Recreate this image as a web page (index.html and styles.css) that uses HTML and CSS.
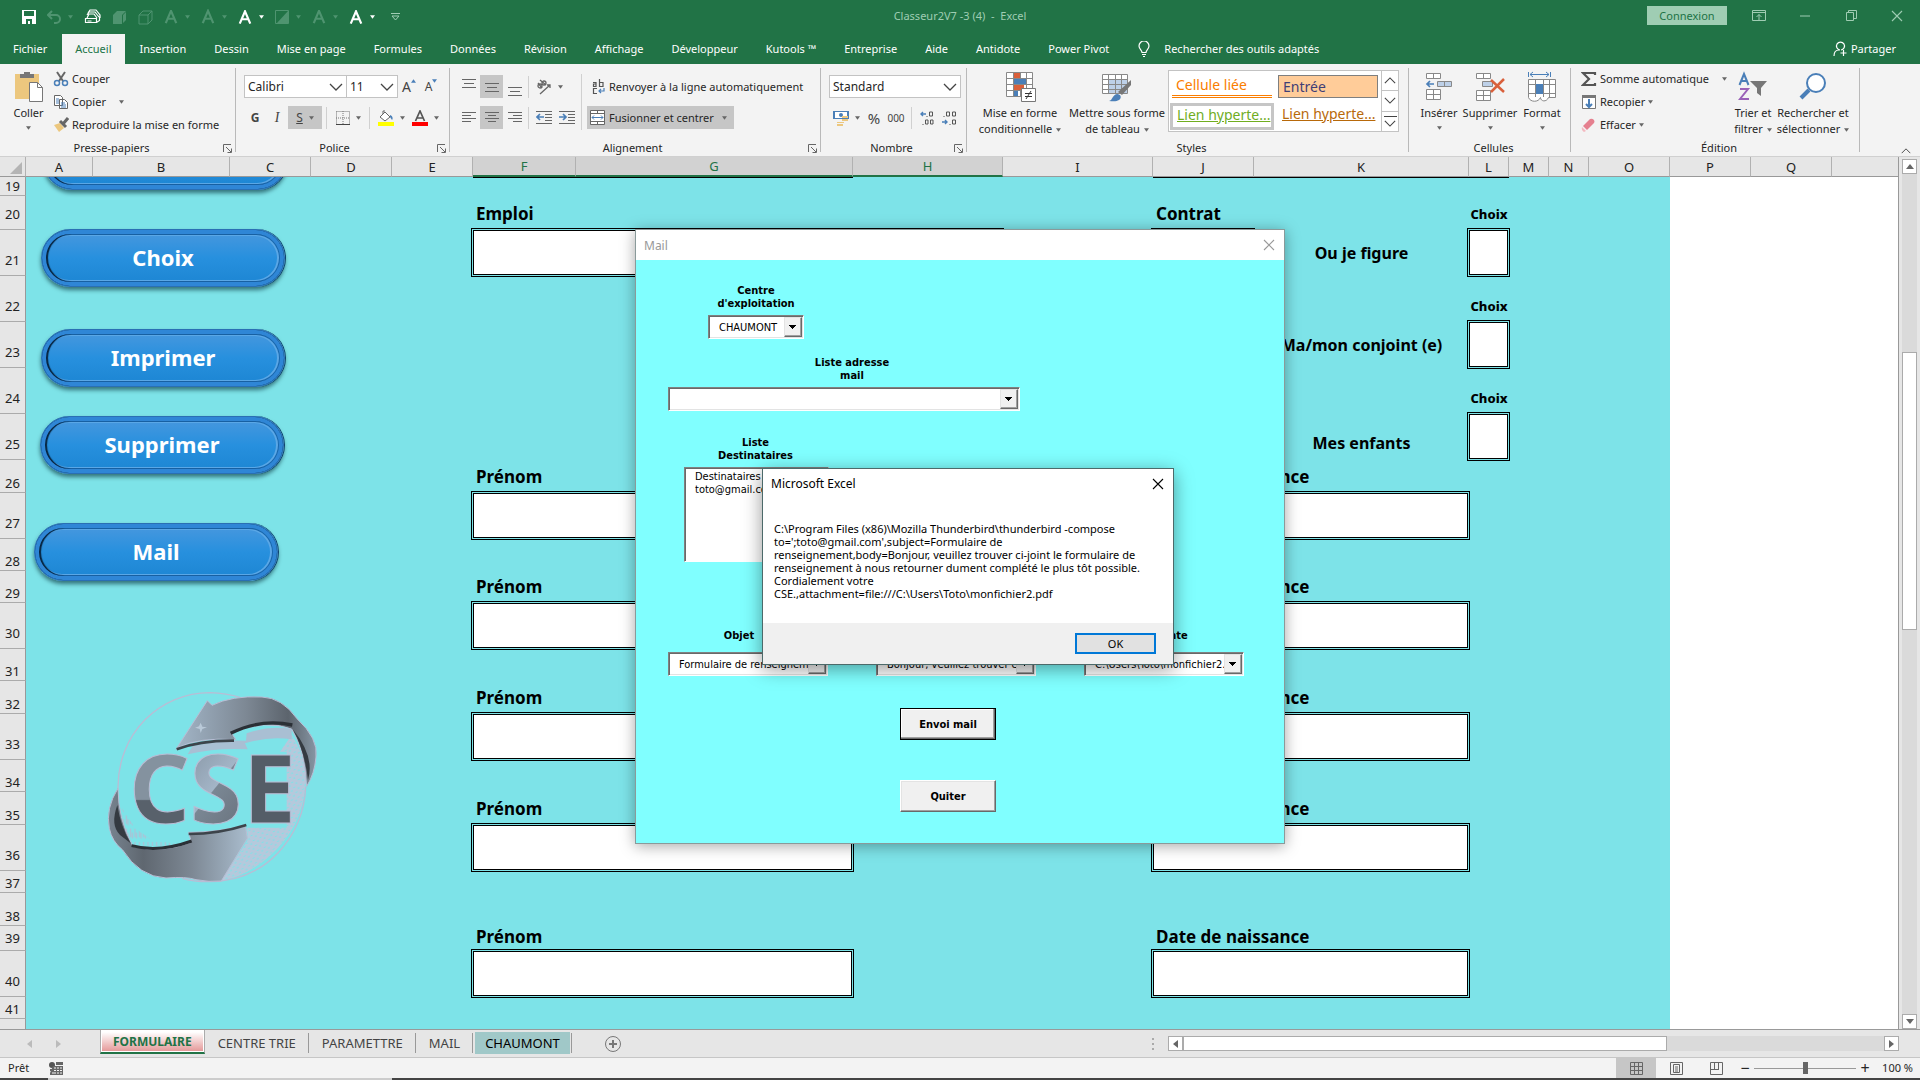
FILE: index.html
```html
<!DOCTYPE html>
<html lang="fr">
<head>
    <meta charset="UTF-8">
    <meta name="viewport" content="width=device-width, initial-scale=1.0">
    <title>Classeur2V7 -3 (4) - Excel</title>
    <link rel="stylesheet" href="styles.css">
</head>
<body>
<svg class="defs" aria-hidden="true">
    <symbol id="caret" viewBox="0 0 6 4"><path d="M0 0h6L3 4z" fill="currentColor"/></symbol>
    <symbol id="chevron" viewBox="0 0 14 8"><path d="M1 1l6 6 6-6" fill="none" stroke="currentColor" stroke-width="1.3"/></symbol>
    <symbol id="launcher" viewBox="0 0 9 9"><path d="M.5 8V.5H8M3 3l5 5M8.500 4.500v4h-4" fill="none" stroke="currentColor"/></symbol>
    <symbol id="cross" viewBox="0 0 12 12"><path d="M1 1l10 10M11 1L1 11" fill="none" stroke="currentColor" stroke-width="1.100"/></symbol>
    <symbol id="letter" viewBox="0 0 16 16"><path d="M2 15L8 1l6 14M4 10h8" fill="none" stroke="currentColor" stroke-width="2.500"/></symbol>
</svg>

<!-- Title bar -->
<header class="titlebar">
    <div class="quick">
        <button class="q on" aria-label="Enregistrer"><svg width="14" height="14" viewBox="0 0 14 14"><path d="M0 0h14v14H0z" fill="#fff"/><path d="M2 1h10v5H2zM4 9h6v5H8v-3H6v3H4z" fill="#217346"/></svg></button>
        <button class="q" aria-label="Annuler"><svg width="14" height="14" viewBox="0 0 14 14"><path d="M5 1L1 5l4 4M1 5h8a4 4 0 0 1 0 8H7" fill="none" stroke="currentColor" stroke-width="2"/></svg><svg class="caret"><use href="#caret"/></svg></button>
        <button class="q on" aria-label="Imprimer"><svg width="17" height="16" viewBox="0 0 17 16"><path d="M4 4l2-3h6l4 5v3M3 6l2-3h6l4 5M1.500 9.500h11v4h-11zM3 9l2-4h5l3 4M12.500 13.500l3-2V8M3.500 12h4" fill="none" stroke="currentColor" stroke-width="1.200"/></svg></button>
        <button class="q" aria-label="Avancer"><svg width="15" height="15" viewBox="0 0 15 15"><path d="M1 5l4-4h9L10 5zM1 5h9v9H1zM11 5l3-3v8l-3 3z" fill="currentColor"/></svg></button>
        <button class="q" aria-label="Reculer"><svg width="15" height="15" viewBox="0 0 15 15"><path d="M1 5l4-4h9v9l-4 4H1zM1 5h9v9M10 5l4-4" fill="none" stroke="currentColor"/></svg></button>
        <button class="q" aria-label="Style WordArt"><svg width="14" height="14"><use href="#letter"/></svg><svg class="caret"><use href="#caret"/></svg></button>
        <button class="q" aria-label="Reflet"><svg width="14" height="16"><use href="#letter"/></svg><svg class="caret"><use href="#caret"/></svg></button>
        <button class="q on" aria-label="Effets"><svg width="14" height="15"><use href="#letter"/></svg><svg class="caret"><use href="#caret"/></svg></button>
        <button class="q" aria-label="Remplissage"><svg width="14" height="14" viewBox="0 0 14 14"><path d="M.5.5h13v13H.5z" fill="none" stroke="currentColor"/><path d="M13 1v12H2z" fill="currentColor"/></svg><svg class="caret"><use href="#caret"/></svg></button>
        <button class="q" aria-label="Contour"><svg width="14" height="14"><use href="#letter"/></svg><svg class="caret"><use href="#caret"/></svg></button>
        <button class="q on" aria-label="Texte"><svg width="14" height="15"><use href="#letter"/></svg><svg class="caret"><use href="#caret"/></svg></button>
        <button class="q more" aria-label="Personnaliser"><svg width="9" height="8" viewBox="0 0 9 8"><path d="M0 .5h9M1 3l3.500 4L8 3z" fill="none" stroke="currentColor"/></svg></button>
    </div>
    <div class="doc-title">Classeur2V7 -3 (4)&nbsp; -&nbsp; Excel</div>
    <div class="window-tools">
        <button class="signin">Connexion</button>
        <button class="win" aria-label="Options du ruban"><svg width="14" height="11" viewBox="0 0 14 11"><path d="M.5.5h13v10H.5zM1 2.500h12M7 10V4.500M4.500 7L7 4.500 9.500 7" fill="none" stroke="currentColor"/></svg></button>
        <button class="win" aria-label="Réduire"><svg width="10" height="2" viewBox="0 0 10 2"><path d="M0 1h10" stroke="currentColor"/></svg></button>
        <button class="win" aria-label="Restaurer"><svg width="11" height="11" viewBox="0 0 11 11"><path d="M.5 2.500h7v8h-7zM2.500 2V.5h8v8H8" fill="none" stroke="currentColor"/></svg></button>
        <button class="win" aria-label="Fermer"><svg width="12" height="12"><use href="#cross"/></svg></button>
    </div>
</header>

<nav class="menu">
    <a href="#">Fichier</a>
    <a href="#" class="active">Accueil</a>
    <a href="#">Insertion</a>
    <a href="#">Dessin</a>
    <a href="#">Mise en page</a>
    <a href="#">Formules</a>
    <a href="#">Données</a>
    <a href="#">Révision</a>
    <a href="#">Affichage</a>
    <a href="#">Développeur</a>
    <a href="#">Kutools ™</a>
    <a href="#">Entreprise</a>
    <a href="#">Aide</a>
    <a href="#">Antidote</a>
    <a href="#">Power Pivot</a>
    <a href="#" class="tellme"><svg width="12" height="16" viewBox="0 0 12 16"><path d="M4 11.500C4 9 1 8 1 5a5 5 0 0 1 10 0c0 3-3 4-3 6.500zM4 13.500h4M5 15.500h2" fill="none" stroke="currentColor" stroke-width="1.200"/></svg>Rechercher des outils adaptés</a>
    <a href="#" class="share"><svg width="14" height="16" viewBox="0 0 14 16"><path d="M7 9a4 4 0 1 1 1 0M1 15c0-4 2-6 5-6M10.500 9v6M7.500 12h6" fill="none" stroke="currentColor" stroke-width="1.200"/></svg>Partager</a>
</nav>

<!-- Ribbon -->
<section class="ribbon">
    <div class="group clipboard">
        <div class="tools">
            <button class="big paste"><svg width="28" height="31" viewBox="0 0 28 31"><path d="M0 3h24v25H0z" fill="#ecc77e"/><path d="M5 7V3h4V1h6v2h4v4z" fill="#777"/><path d="M14.500 11.500h8l5 5v14h-13z" fill="#fff" stroke="#777"/><path d="M22.500 11.500v5h5" fill="none" stroke="#777"/></svg><span>Coller</span><svg class="caret"><use href="#caret"/></svg></button>
            <div class="stack">
                <button><svg width="16" height="16" viewBox="0 0 16 16"><path d="M4 1l6 9M12 1L6 10" stroke="#666" stroke-width="2"/><circle cx="4" cy="12" r="2.500" fill="none" stroke="#4a7fb8" stroke-width="1.500"/><circle cx="12" cy="12" r="2.500" fill="none" stroke="#4a7fb8" stroke-width="1.500"/></svg>Couper</button>
                <button><svg width="16" height="16" viewBox="0 0 16 16"><path d="M1.500 1.500h6l2 2v8h-8zM6.500 5.500h5l3 3v6h-8z" fill="#fff" stroke="#666"/><path d="M3 5h3M3 7h3M3 9h3M8 9h4M8 11h5M8 13h5" stroke="#4a7fb8"/></svg>Copier<svg class="caret far"><use href="#caret"/></svg></button>
                <button><svg width="16" height="16" viewBox="0 0 16 16"><path d="M1 8l6-2 4 5-5 4z" fill="#ecc77e"/><path d="M7 4l6 6M10 7l5-6" stroke="#666" stroke-width="3"/></svg>Reproduire la mise en forme</button>
            </div>
        </div>
        <div class="caption"><span>Presse-papiers</span><svg class="launcher"><use href="#launcher"/></svg></div>
    </div>

    <div class="group font">
        <div class="tools rows">
            <div class="row">
                <span class="pick name"><select aria-label="Police"><option>Calibri</option></select><svg class="chev"><use href="#chevron"/></svg></span>
                <span class="pick size"><select aria-label="Taille"><option>11</option></select><svg class="chev"><use href="#chevron"/></svg></span>
                <button class="tool glyph" aria-label="Agrandir la police">A<svg class="mark" viewBox="0 0 6 4"><path d="M0 4h6L3 0z" fill="#4a7fb8"/></svg></button>
                <button class="tool glyph small" aria-label="Réduire la police">A<svg class="mark" viewBox="0 0 6 4"><path d="M0 0h6L3 4z" fill="#4a7fb8"/></svg></button>
            </div>
            <div class="row">
                <button class="tool"><b>G</b></button>
                <button class="tool"><i>I</i></button>
                <button class="tool wide pressed"><u>S</u><svg class="caret"><use href="#caret"/></svg></button>
                <span class="sep slim"></span>
                <button class="tool wide" aria-label="Bordures"><svg width="14" height="14" viewBox="0 0 14 14"><path d="M.5.5h13v13M.5.5v13M7 0v14M0 7h14" fill="none" stroke="#777" stroke-dasharray="1 1"/><path d="M0 13.500h14" stroke="#444"/></svg><svg class="caret"><use href="#caret"/></svg></button>
                <span class="sep slim"></span>
                <button class="tool wide" aria-label="Couleur de remplissage"><svg width="16" height="16" viewBox="0 0 16 16"><path d="M2 7l5-5 5 5-5 4zM5 4V1h2" fill="#fff" stroke="#666"/><path d="M12 5c3 1 3 4 2 5l-2-3z" fill="#4a7fb8"/><path d="M0 12h16v4H0z" fill="#ff0"/></svg><svg class="caret"><use href="#caret"/></svg></button>
                <button class="tool wide" aria-label="Couleur de police"><svg width="16" height="16" viewBox="0 0 16 16"><path d="M3.500 11L8 1l4.500 10M5 8h6" fill="none" stroke="#555" stroke-width="1.700"/><path d="M0 12h16v4H0z" fill="red"/></svg><svg class="caret"><use href="#caret"/></svg></button>
            </div>
        </div>
        <div class="caption"><span>Police</span><svg class="launcher"><use href="#launcher"/></svg></div>
    </div>

    <div class="group align">
        <div class="tools">
            <div class="rows">
                <div class="row">
                    <button class="tool" aria-label="Aligner en haut"><svg width="14" height="18" viewBox="0 0 14 18"><path d="M0 1.500h14M2 5.500h10M0 9.500h14" stroke="#666"/></svg></button>
                    <button class="tool pressed" aria-label="Aligner au centre"><svg width="14" height="18" viewBox="0 0 14 18"><path d="M0 5.500h14M2 9.500h10M0 13.500h14" stroke="#666"/></svg></button>
                    <button class="tool" aria-label="Aligner en bas"><svg width="14" height="18" viewBox="0 0 14 18"><path d="M0 9.500h14M2 13.500h10M0 17.500h14" stroke="#666"/></svg></button>
                    <span class="sep near"></span>
                    <button class="tool wide" aria-label="Orientation"><svg width="16" height="16" viewBox="0 0 16 16"><circle cx="4" cy="7" r="2" fill="none" stroke="#666" stroke-width="1.300"/><circle cx="8" cy="4" r="2" fill="none" stroke="#666" stroke-width="1.300"/><path d="M2 4l4 5M4 1l6 5M4 15L14 6M11 6h3v3" fill="none" stroke="#666" stroke-width="1.300"/></svg><svg class="caret"><use href="#caret"/></svg></button>
                </div>
                <div class="row">
                    <button class="tool" aria-label="Aligner à gauche"><svg width="14" height="14" viewBox="0 0 14 14"><path d="M0 1.500h14M0 4.500h9M0 7.500h14M0 10.500h9" stroke="#666"/></svg></button>
                    <button class="tool pressed" aria-label="Centrer"><svg width="14" height="14" viewBox="0 0 14 14"><path d="M0 1.500h14M3 4.500h8M0 7.500h14M3 10.500h8" stroke="#666"/></svg></button>
                    <button class="tool" aria-label="Aligner à droite"><svg width="14" height="14" viewBox="0 0 14 14"><path d="M0 1.500h14M5 4.500h9M0 7.500h14M5 10.500h9" stroke="#666"/></svg></button>
                    <span class="sep near"></span>
                    <button class="tool" aria-label="Diminuer le retrait"><svg width="16" height="14" viewBox="0 0 16 14"><path d="M0 .5h16M9 3.500h7M9 6.500h7M9 9.500h7M0 12.500h16" stroke="#666"/><path d="M8 6H1M4 3L1 6l3 3" fill="none" stroke="#4a7fb8" stroke-width="1.700"/></svg></button>
                    <button class="tool" aria-label="Augmenter le retrait"><svg width="16" height="14" viewBox="0 0 16 14"><path d="M0 .5h16M9 3.500h7M9 6.500h7M9 9.500h7M0 12.500h16" stroke="#666"/><path d="M0 6h7M4 3l3 3-3 3" fill="none" stroke="#4a7fb8" stroke-width="1.700"/></svg></button>
                </div>
            </div>
            <span class="sep tall"></span>
            <div class="rows">
                <div class="row">
                    <button class="tool text"><svg width="13" height="16" viewBox="0 0 13 16"><path d="M1 3.500h3v4H1.500V5H4M7.500 0v7.500H11v-4H8M5 9.500H1.500v5H5" fill="none" stroke="#555" stroke-width="1.200"/><path d="M12 9v3H7M9 10l-2 2 2 2" fill="none" stroke="#4a7fb8" stroke-width="1.200"/></svg>Renvoyer à la ligne automatiquement</button>
                </div>
                <div class="row">
                    <button class="tool text merge pressed"><svg width="15" height="15" viewBox="0 0 15 15"><path d="M.5.5h14v14H.5zM0 3.500h15M0 11.500h15M7.500 0v3M7.500 12v3" fill="#fff" stroke="#666"/><path d="M2 7.500h11M4 5.500l-2 2 2 2M11 5.500l2 2-2 2" fill="none" stroke="#4a7fb8"/></svg>Fusionner et centrer<svg class="caret"><use href="#caret"/></svg></button>
                </div>
            </div>
        </div>
        <div class="caption"><span>Alignement</span><svg class="launcher"><use href="#launcher"/></svg></div>
    </div>

    <div class="group number">
        <div class="tools rows">
            <div class="row">
                <span class="pick format"><select aria-label="Format de nombre"><option>Standard</option></select><svg class="chev"><use href="#chevron"/></svg></span>
            </div>
            <div class="row">
                <button class="tool wide" aria-label="Format comptable"><svg width="16" height="16" viewBox="0 0 16 16"><path d="M0 1h16v8H0z" fill="#4a7fb8"/><path d="M2 2h12v6H2z" fill="#fff"/><circle cx="8" cy="5" r="2" fill="#4a7fb8"/><path d="M9 6h6v2H9zM9 9h6v2H9zM4 12h7v1H4zM4 14h6v2H4z" fill="#ecc77e"/></svg><svg class="caret"><use href="#caret"/></svg></button>
                <button class="tool pct">%</button>
                <button class="tool mini">000</button>
                <span class="sep slim"></span>
                <button class="tool mini" aria-label="Ajouter une décimale"><svg width="15" height="14" viewBox="0 0 15 14"><path d="M6 3H1M3 1L1 3l2 2" fill="none" stroke="#4a7fb8" stroke-width="1.400"/><path d="M9.500 1h3v4h-3zM5.500 9h2.500v4H5.500zM10.500 9h2.500v4h-2.500zM7 5v1M3 13v1" fill="none" stroke="#555"/></svg></button>
                <button class="tool mini" aria-label="Réduire les décimales"><svg width="15" height="14" viewBox="0 0 15 14"><path d="M0 11h5M3 9l2 2-2 2" fill="none" stroke="#4a7fb8" stroke-width="1.400"/><path d="M4.500 1h3v4h-3zM10.500 1h3v4h-3zM10.500 9h3v4h-3zM2 5v1M8 13v1" fill="none" stroke="#555"/></svg></button>
            </div>
        </div>
        <div class="caption"><span>Nombre</span><svg class="launcher"><use href="#launcher"/></svg></div>
    </div>

    <div class="group styles">
        <div class="tools">
            <button class="big cond"><svg width="31" height="31" viewBox="0 0 31 31"><path d="M1.500 1.500h26v24h-26zM1 7.500h27M1 13.500h27M1 19.500h27M8.500 1v25M15.500 1v25M21.500 1v25" fill="#fff" stroke="#888"/><path d="M9 2h6v5H9zM9 14h10v5H9z" fill="#d9603b"/><path d="M9 8h12v5H9zM9 20h4v5H9z" fill="#4a7fb8"/><path d="M16.500 17.500h14v13h-14z" fill="#fff" stroke="#777"/><path d="M20 22.500h7M20 25.500h7M26 20l-5 8" stroke="#333"/></svg><span>Mise en forme<br>conditionnelle<svg class="caret near"><use href="#caret"/></svg></span></button>
            <button class="big tableau"><svg width="30" height="31" viewBox="0 0 30 31"><path d="M.5 3.500h25v19H.5z" fill="#fff"/><path d="M7 8h18v14H7z" fill="#bdd0e8"/><path d="M.5 3.500h25v19H.5zM0 8.500h26M0 13.500h26M0 18.500h26M6.500 3v20M13.500 3v20M19.500 3v20" fill="none" stroke="#888"/><path d="M29 9v5l-9 10-4-3z" fill="#777"/><path d="M7 30c4-1 3-6 8-7 4 0 5 4 2 6-3 2-7 1-10 1z" fill="#4a7fb8"/></svg><span>Mettre sous forme<br>de tableau<svg class="caret near"><use href="#caret"/></svg></span></button>
            <div class="gallery">
                <div class="swatches">
                    <button class="swatch linked">Cellule liée</button>
                    <button class="swatch entry">Entrée</button>
                    <button class="swatch visited selected">Lien hyperte...</button>
                    <button class="swatch link">Lien hyperte...</button>
                </div>
                <div class="spin">
                    <button aria-label="Précédent"><svg class="chev up"><use href="#chevron"/></svg></button>
                    <button aria-label="Suivant"><svg class="chev"><use href="#chevron"/></svg></button>
                    <button class="all" aria-label="Autres"><svg class="chev"><use href="#chevron"/></svg></button>
                </div>
            </div>
        </div>
        <div class="caption"><span>Styles</span></div>
    </div>

    <div class="group cells">
        <div class="tools">
            <button class="big insert"><svg width="28" height="31" viewBox="0 0 28 31"><path d="M1.500 2.500h14v5h-14zM8.500 2v6M1.500 18.500h14v10h-14zM8.500 18v11M1 23.500h15" fill="#fff" stroke="#888"/><path d="M12.500 10.500h14v5h-14zM19.500 10v6" fill="#bdd0e8" stroke="#888"/><path d="M9 13H2M5 10l-3 3 3 3" fill="none" stroke="#4a7fb8" stroke-width="1.700"/></svg><span>Insérer</span><svg class="caret"><use href="#caret"/></svg></button>
            <button class="big remove"><svg width="30" height="31" viewBox="0 0 30 31"><path d="M1.500 2.500h14v5h-14zM8.500 2v6M1.500 19.500h14v10h-14zM8.500 19v11M1 24.500h15" fill="#fff" stroke="#888"/><path d="M7.500 10.500h10v5h-10z" fill="#bdd0e8" stroke="#888"/><path d="M16 9l13 12M29 8L16 21" stroke="#d9603b" stroke-width="2.500"/></svg><span>Supprimer</span><svg class="caret"><use href="#caret"/></svg></button>
            <button class="big resize"><svg width="28" height="31" viewBox="0 0 28 31"><path d="M.5 1v5M22.500 1v5M2 3.500h19M5 1L2 3.500 5 6M18 1l3 2.500L18 6" fill="none" stroke="#4a7fb8"/><path d="M.5 8.500h27v18h-7c-2 5-8 4-8 0-2 5-10 5-12 0zM0 13.500h28M0 22.500h28M7.500 8v18M15.500 8v18M21.500 8v18" fill="#fff" stroke="#888"/><path d="M8 13h7v10H8z" fill="#4a7fb8"/></svg><span>Format</span><svg class="caret"><use href="#caret"/></svg></button>
        </div>
        <div class="caption"><span>Cellules</span></div>
    </div>

    <div class="group editing">
        <div class="tools">
            <div class="stack">
                <button><svg width="16" height="16" viewBox="0 0 16 16"><path d="M14 4V2H2l6 6-6 6h12v-2" fill="none" stroke="#555" stroke-width="2.200"/></svg>Somme automatique<svg class="caret far"><use href="#caret"/></svg></button>
                <button><svg width="16" height="16" viewBox="0 0 16 16"><path d="M1.500 1.500h13v13h-13z" fill="#fff" stroke="#777"/><path d="M1 1h14v3H1z" fill="#777"/><path d="M8 5v8M5 10l3 3 3-3" fill="none" stroke="#4a7fb8" stroke-width="2"/></svg>Recopier<svg class="caret near"><use href="#caret"/></svg></button>
                <button><svg width="16" height="16" viewBox="0 0 16 16"><path d="M2 9l7-7q2-1 4 1 1 2 0 3l-7 7z" fill="#e5808f"/><path d="M1 10l4 4-2 1q-3-2-2-5z" fill="#f3b9c0"/></svg>Effacer<svg class="caret near"><use href="#caret"/></svg></button>
            </div>
            <button class="big sort"><svg width="30" height="31" viewBox="0 0 30 31"><path d="M1.500 14L6 3l4.500 11M3 10h6" fill="none" stroke="#4a7fb8" stroke-width="2"/><path d="M2 18h8L2 28h9" fill="none" stroke="#9a62b8" stroke-width="2"/><path d="M12 10h17l-6 7v8l-4-3v-5z" fill="#777"/></svg><span>Trier et<br>filtrer<svg class="caret near"><use href="#caret"/></svg></span></button>
            <button class="big find"><svg width="28" height="31" viewBox="0 0 28 31"><circle cx="17" cy="12" r="9" fill="#fff" stroke="#4a7fb8" stroke-width="2"/><path d="M10 19l-8 8" stroke="#4a7fb8" stroke-width="4"/></svg><span>Rechercher et<br>sélectionner<svg class="caret near"><use href="#caret"/></svg></span></button>
        </div>
        <div class="caption"><span>Édition</span></div>
    </div>
    <button class="collapse" aria-label="Réduire le ruban"><svg class="chev up"><use href="#chevron"/></svg></button>
</section>

<!-- Sheet -->
<main class="workspace">
    <div class="sheet">
        <table>
            <colgroup>
                <col class="c-head"><col class="c-a"><col class="c-b"><col class="c-m"><col class="c-m"><col class="c-m">
                <col class="c-f"><col class="c-g"><col class="c-h"><col class="c-h"><col class="c-j"><col class="c-k">
                <col class="c-s"><col class="c-s"><col class="c-s"><col class="c-m"><col class="c-m"><col class="c-m"><col>
            </colgroup>
            <thead>
                <tr><th class="corner"><svg width="12" height="12" viewBox="0 0 12 12"><path d="M12 0v12H0z" fill="#b4b4b4"/></svg></th><th>A</th><th>B</th><th>C</th><th>D</th><th>E</th><th class="sel">F</th><th class="sel">G</th><th class="sel">H</th><th>I</th><th>J</th><th>K</th><th>L</th><th>M</th><th>N</th><th>O</th><th>P</th><th>Q</th><th class="last"></th></tr>
            </thead>
            <tbody>
                <tr class="r19"><th>19</th><td colspan="5"></td><td colspan="2" class="edge"></td><td colspan="2"></td><td colspan="3" class="edge"></td><td colspan="3"></td><td colspan="3" class="out"></td></tr>
                <tr class="r34 tall"><th>20</th><td colspan="5"></td><td colspan="4" class="lbl"><label for="f21">Emploi</label></td><td colspan="2" class="lbl"><label for="j21">Contrat</label></td><td class="choice"><label for="l21">Choix</label></td><td colspan="3"></td><td colspan="3" class="out"></td></tr>
                <tr class="r46 tall"><th>21</th><td colspan="5"></td><td colspan="3"><input id="f21" class="field"></td><td></td><td><input id="j21" class="field"></td><td class="who">Ou je figure</td><td><input id="l21" class="field"></td><td colspan="3"></td><td colspan="3" class="out"></td></tr>
                <tr class="r46 tall"><th>22</th><td colspan="11"></td><td class="choice"><label for="l23">Choix</label></td><td colspan="3"></td><td colspan="3" class="out"></td></tr>
                <tr class="r46 tall"><th>23</th><td colspan="10"></td><td class="who">Ma/mon conjoint (e)</td><td><input id="l23" class="field"></td><td colspan="3"></td><td colspan="3" class="out"></td></tr>
                <tr class="r46 tall"><th>24</th><td colspan="11"></td><td class="choice"><label for="l25">Choix</label></td><td colspan="3"></td><td colspan="3" class="out"></td></tr>
                <tr class="r46 tall"><th>25</th><td colspan="10"></td><td class="who low">Mes enfants</td><td><input id="l25" class="field"></td><td colspan="3"></td><td colspan="3" class="out"></td></tr>
                <tr class="r33"><th>26</th><td colspan="5"></td><td colspan="4" class="lbl"><label for="f27">Prénom</label></td><td colspan="2" class="lbl"><label for="j27">Date de naissance</label></td><td colspan="4"></td><td colspan="3" class="out"></td></tr>
                <tr class="r46 tall"><th>27</th><td colspan="5"></td><td colspan="2"><input id="f27" class="field"></td><td colspan="2"></td><td colspan="2"><input id="j27" class="field"></td><td colspan="4"></td><td colspan="3" class="out"></td></tr>
                <tr class="r32"><th>28</th><td colspan="15"></td><td colspan="3" class="out"></td></tr>
                <tr class="r32"><th>29</th><td colspan="5"></td><td colspan="4" class="lbl"><label for="f30">Prénom</label></td><td colspan="2" class="lbl"><label for="j30">Date de naissance</label></td><td colspan="4"></td><td colspan="3" class="out"></td></tr>
                <tr class="r46 tall"><th>30</th><td colspan="5"></td><td colspan="2"><input id="f30" class="field"></td><td colspan="2"></td><td colspan="2"><input id="j30" class="field"></td><td colspan="4"></td><td colspan="3" class="out"></td></tr>
                <tr class="r32"><th>31</th><td colspan="15"></td><td colspan="3" class="out"></td></tr>
                <tr class="r33"><th>32</th><td colspan="5"></td><td colspan="4" class="lbl"><label for="f33">Prénom</label></td><td colspan="2" class="lbl"><label for="j33">Date de naissance</label></td><td colspan="4"></td><td colspan="3" class="out"></td></tr>
                <tr class="r46 tall"><th>33</th><td colspan="5"></td><td colspan="2"><input id="f33" class="field"></td><td colspan="2"></td><td colspan="2"><input id="j33" class="field"></td><td colspan="4"></td><td colspan="3" class="out"></td></tr>
                <tr class="r32"><th>34</th><td colspan="15"></td><td colspan="3" class="out"></td></tr>
                <tr class="r33"><th>35</th><td colspan="5"></td><td colspan="4" class="lbl"><label for="f36">Prénom</label></td><td colspan="2" class="lbl"><label for="j36">Date de naissance</label></td><td colspan="4"></td><td colspan="3" class="out"></td></tr>
                <tr class="r46 tall"><th>36</th><td colspan="5"></td><td colspan="2"><input id="f36" class="field"></td><td colspan="2"></td><td colspan="2"><input id="j36" class="field"></td><td colspan="4"></td><td colspan="3" class="out"></td></tr>
                <tr class="r22"><th>37</th><td colspan="15"></td><td colspan="3" class="out"></td></tr>
                <tr class="r33"><th>38</th><td colspan="15"></td><td colspan="3" class="out"></td></tr>
                <tr class="r25"><th>39</th><td colspan="5"></td><td colspan="4" class="lbl"><label for="f40">Prénom</label></td><td colspan="2" class="lbl"><label for="j40">Date de naissance</label></td><td colspan="4"></td><td colspan="3" class="out"></td></tr>
                <tr class="r46 tall"><th>40</th><td colspan="5"></td><td colspan="2"><input id="f40" class="field"></td><td colspan="2"></td><td colspan="2"><input id="j40" class="field"></td><td colspan="4"></td><td colspan="3" class="out"></td></tr>
                <tr class="r22"><th>41</th><td colspan="15"></td><td colspan="3" class="out"></td></tr>
                <tr class="r22"><th></th><td colspan="15"></td><td colspan="3" class="out"></td></tr>
            </tbody>
        </table>

        <!-- Shapes floating over the cells -->
        <div class="shapes">
            <button class="pill first" aria-label="Valider"></button>
            <button class="pill choix">Choix</button>
            <button class="pill imprimer">Imprimer</button>
            <button class="pill supprimer">Supprimer</button>
            <button class="pill mail">Mail</button>
            <svg class="logo" viewBox="0 0 840 630" role="img" aria-label="CSE">
                <defs>
                    <linearGradient id="arrowTop" x1="0" y1="0" x2="1" y2="0"><stop offset="0" stop-color="#a3b6c8"/><stop offset=".5" stop-color="#7d8894"/><stop offset=".8" stop-color="#5c646d"/><stop offset="1" stop-color="#8796a4"/></linearGradient>
                    <linearGradient id="arrowBottom" x1="1" y1="0" x2="0" y2="0"><stop offset="0" stop-color="#a9bccd"/><stop offset=".4" stop-color="#7d8894"/><stop offset=".75" stop-color="#5f6770"/><stop offset="1" stop-color="#77838f"/></linearGradient>
                    <linearGradient id="inC" x1="0" y1="0" x2="0" y2="1"><stop offset=".6" stop-color="#84929f"/><stop offset=".61" stop-color="#58616b"/></linearGradient>
                    <linearGradient id="inS" x1="0" y1="0" x2=".5" y2="1"><stop offset="0" stop-color="#7f8c9a"/><stop offset=".6" stop-color="#a3b5c7"/><stop offset=".61" stop-color="#7a8794"/><stop offset="1" stop-color="#6b7580"/></linearGradient>
                    <pattern id="mesh" width="22" height="16" patternUnits="userSpaceOnUse" patternTransform="rotate(-24)"><path d="M0 0h22v16H0z" fill="#b5c9dc"/><path d="M2 4h7M13 11h6" stroke="#7de3e8" stroke-width="3"/></pattern>
                    <pattern id="ticks" width="13" height="40" patternUnits="userSpaceOnUse"><path d="M4 6v26M9 18v18" stroke="#a9c3d6" stroke-width="4"/></pattern>
                </defs>
                <path d="M695 165q50 80 42 150-12 130-110 215-70 60-145 73l80-120v-40h118V215h-20z" fill="url(#mesh)"/>
                <path d="M186 385l40 60 50 35 60 10 30 5-30 5-120-5q-30-50-30-110z" fill="url(#ticks)"/>
                <path d="M174 330C170 160 300 38 450 38q50 2 90 14M737 320c-5 150-120 285-290 285q-50 0-80-10" fill="none" stroke="#b9bdd4" stroke-width="4"/>
                <path d="M560 160q70-25 135-12v30q-70-10-140 12l8 18q-90-6-180 15l15-25q80-20 160-16z" fill="#a9bfd3"/>
                <path d="M348 208L442 62l14 14q60-30 150-25 60 2 105 65 65 60 57 115-4 50-28 88-5-110-45-172-80-30-180 12l12 20q-110-8-175 24z" fill="url(#arrowTop)" stroke="#b9bdd4" stroke-width="3"/>
                <path d="M700 150q65 80 44 150-10-85-44-150z" fill="#343a41"/>
                <path d="M512 160q90-45 185-25" fill="none" stroke="#2b3036" stroke-width="10"/>
                <path d="M350 208q70-27 172-26" fill="none" stroke="#3d444b" stroke-width="8"/>
                <path d="M174 325q-38 60-26 120 8 40 40 65 50 80 130 84 60-5 90 5 40 8 76 4l78-128-6-40q-80 22-170 22l8 30q-90 35-175 12-45-80-45-174z" fill="url(#arrowBottom)" stroke="#b9bdd4" stroke-width="3"/>
                <path d="M172 375q-22 60 8 90l32 25q-30-50-40-115z" fill="#343a41"/>
                <path d="M215 497q80 22 180-14" fill="none" stroke="#2b3036" stroke-width="9"/>
                <path d="M386 462q90 0 173-27" fill="none" stroke="#3d444b" stroke-width="8"/>
                <path d="M422 128l5 12 14 2-14 5-5 12-3-12-14-4 12-4z" fill="#b9c9d8"/>
                <g class="logo-text">
                    <text x="207" y="430" fill="url(#inC)">C</text>
                    <text x="389" y="430" fill="url(#inS)">S</text>
                    <text x="548" y="430" fill="#545d67">E</text>
                </g>
            </svg>
        </div>
    </div>
    <div class="vscroll">
        <button aria-label="Défiler vers le haut"><svg width="8" height="5" viewBox="0 0 8 5"><path d="M0 5h8L4 0z" fill="#666"/></svg></button>
        <div class="track"><div class="thumb"></div></div>
        <button aria-label="Défiler vers le bas"><svg width="8" height="5" viewBox="0 0 8 5"><path d="M0 0h8L4 5z" fill="#666"/></svg></button>
    </div>
</main>

<div class="tabbar">
    <div class="tabnav">
        <button aria-label="Feuille précédente"><svg width="5" height="8" viewBox="0 0 5 8"><path d="M5 0v8L0 4z" fill="#bbb"/></svg></button>
        <button aria-label="Feuille suivante"><svg width="5" height="8" viewBox="0 0 5 8"><path d="M0 0v8l5-4z" fill="#bbb"/></svg></button>
    </div>
    <button class="tab current"><span>FORMULAIRE</span></button>
    <button class="tab">CENTRE TRIE</button>
    <button class="tab">PARAMETTRE</button>
    <button class="tab">MAIL</button>
    <button class="tab tinted"><span>CHAUMONT</span></button>
    <button class="add" aria-label="Nouvelle feuille"><svg width="16" height="16" viewBox="0 0 16 16"><circle cx="8" cy="8" r="7.500" fill="none" stroke="#777"/><path d="M8 4v8M4 8h8" stroke="#777" stroke-width="2"/></svg></button>
    <div class="hscroll">
        <svg width="2" height="12" viewBox="0 0 2 12"><path d="M0 0h2v2H0zM0 5h2v2H0zM0 10h2v2H0z" fill="#aaa"/></svg>
        <button aria-label="Défiler vers la gauche"><svg width="5" height="8" viewBox="0 0 5 8"><path d="M5 0v8L0 4z" fill="#666"/></svg></button>
        <div class="track"><div class="thumb"></div></div>
        <button aria-label="Défiler vers la droite"><svg width="5" height="8" viewBox="0 0 5 8"><path d="M0 0v8l5-4z" fill="#666"/></svg></button>
    </div>
</div>

<footer class="status">
    <span>Prêt</span>
    <svg width="14" height="13" viewBox="0 0 14 13"><circle cx="3" cy="3" r="3" fill="#555"/><path d="M7 0h7v3H7zM1 7h2v2H1zM4 4h10v9H1v-2" fill="#666"/><path d="M5 6h2M8 6h2M11 6h2M5 8.500h2M8 8.500h2M11 8.500h2M3 11h4M8 11h2M11 11h2" stroke="#f3f3f3"/></svg>
    <div class="views">
        <button class="view on" aria-label="Normal"><svg width="13" height="13" viewBox="0 0 13 13"><path d="M.5.5h12v12H.5zM4.500 0v13M8.500 0v13M0 4.500h13M0 8.500h13" fill="none" stroke="#666"/></svg></button>
        <button class="view" aria-label="Mise en page"><svg width="13" height="13" viewBox="0 0 13 13"><path d="M.5.5h12v12H.5zM3.500 2.500h6v8h-6zM5 5h3M5 7h3M5 9h3" fill="none" stroke="#666"/></svg></button>
        <button class="view" aria-label="Sauts de page"><svg width="13" height="13" viewBox="0 0 13 13"><path d="M.5.5h12v12H.5zM4.500 0v7M8.500 0v7M0 7.500h9" fill="none" stroke="#666"/></svg></button>
        <button class="zoom-step" aria-label="Zoom arrière">−</button>
        <input type="range" class="zoom" min="0" max="200" value="100" aria-label="Zoom">
        <button class="zoom-step" aria-label="Zoom avant">+</button>
        <span class="percent">100 %</span>
    </div>
</footer>
<div class="desk"><div class="desk-light"></div></div>

<!-- Mail form -->
<section class="window form" role="dialog" aria-labelledby="mailTitle">
    <div class="bar"><span id="mailTitle">Mail</span><button class="close" aria-label="Fermer"><svg width="12" height="12"><use href="#cross"/></svg></button></div>
    <div class="form-body">
        <div class="item centre">
            <label for="centre">Centre<br>d'exploitation</label>
            <span class="combo"><select id="centre"><option>CHAUMONT</option></select></span>
        </div>
        <div class="item adresse">
            <label for="adresse">Liste adresse<br>mail</label>
            <span class="combo"><select id="adresse"><option></option></select></span>
        </div>
        <div class="item dest">
            <label for="dest">Liste<br>Destinataires</label>
            <select id="dest" class="list" size="6"><option>Destinataires</option><option>toto@gmail.com</option></select>
        </div>
        <div class="trio">
            <div class="item"><label for="objet">Objet</label><span class="combo"><select id="objet"><option>Formulaire de renseignement</option></select></span></div>
            <div class="item"><label for="corps">Message</label><span class="combo"><select id="corps"><option>Bonjour, veuillez trouver ci-joint</option></select></span></div>
            <div class="item"><label for="piece">Pièce jointe</label><span class="combo"><select id="piece"><option>C:\Users\Toto\monfichier2.pdf</option></select></span></div>
        </div>
        <button class="push default">Envoi mail</button>
        <button class="push">Quiter</button>
    </div>
</section>

<!-- Message box -->
<section class="window msgbox" role="alertdialog" aria-labelledby="msgTitle">
    <div class="bar"><span id="msgTitle">Microsoft Excel</span><button class="close" aria-label="Fermer"><svg width="12" height="12"><use href="#cross"/></svg></button></div>
    <p>C:\Program Files (x86)\Mozilla Thunderbird\thunderbird -compose<br>to=';toto@gmail.com',subject=Formulaire de<br>renseignement,body=Bonjour, veuillez trouver ci-joint le formulaire de<br>renseignement à nous retourner dument complété le plus tôt possible.<br>Cordialement votre<br>CSE.,attachment=file:///C:\Users\Toto\monfichier2.pdf</p>
    <div class="actions"><button class="ok">OK</button></div>
</section>
</body>
</html>
```
FILE: styles.css
```css
* {
    box-sizing: border-box;
}

body {
    margin: 0;
    height: 100vh;
    display: flex;
    flex-direction: column;
    overflow: hidden;
    position: relative;
    font: 11px/16px "Noto Sans", "Open Sans", sans-serif;
    color: #262626;
    background: #e6e6e6;
}

button,
select,
input {
    font: inherit;
    color: inherit;
    margin: 0;
    padding: 0;
    border: 0;
    border-radius: 0;
    background: none;
    outline: 0;
}

button {
    display: flex;
    align-items: center;
    justify-content: center;
    white-space: nowrap;
}

select {
    appearance: none;
}

svg {
    display: block;
    flex: none;
}

.defs {
    display: none;
}

.caret {
    width: 5px;
    height: 4px;
    color: #666;
}

.caret.far {
    margin-left: 10px;
}

.caret.near {
    display: inline-block;
    margin-left: 4px;
    vertical-align: middle;
}

.chev {
    width: 14px;
    height: 8px;
    color: #444;
}

.chev.up {
    transform: rotate(180deg);
}

/* title bar */
.titlebar {
    height: 34px;
    display: grid;
    grid-template-columns: 1fr auto 1fr;
    align-items: center;
    background: #217346;
    color: #9fcdb3;
}

.doc-title {
    margin-bottom: 2px;
}

.quick {
    display: flex;
    align-items: center;
    gap: 11px;
    padding-left: 22px;
}

.q {
    gap: 7px;
    height: 22px;
    color: #4f9470;
}

.q .caret {
    color: inherit;
}

.q.on {
    color: #fff;
}

.q.more {
    color: #9fcdb3;
    margin-left: 5px;
}

.window-tools {
    display: flex;
    justify-content: flex-end;
    align-items: center;
    margin-bottom: 3px;
}

.signin {
    width: 80px;
    height: 19px;
    margin-right: 9px;
    background: #9fcdb3;
    color: #217346;
}

.win {
    width: 46px;
    height: 22px;
}

/* menu */
.menu {
    height: 30px;
    display: flex;
    gap: 2px;
    background: #217346;
}

.menu a {
    display: flex;
    align-items: center;
    padding: 0 13px;
    color: #fff;
    text-decoration: none;
    white-space: nowrap;
}

.menu .active {
    background: #f3f3f3;
    color: #217346;
}

.menu .tellme {
    padding-left: 14px;
    gap: 14px;
}

.menu .share {
    margin-left: auto;
    padding-right: 24px;
    gap: 4px;
}

/* ribbon */
.ribbon {
    display: flex;
    height: 93px;
    background: #f3f3f3;
    border-bottom: 1px solid #d0d0d0;
}

.group {
    flex: none;
    display: flex;
    flex-direction: column;
    position: relative;
    padding-left: 7px;
}

.group::after {
    content: "";
    position: absolute;
    right: 0;
    top: 4px;
    bottom: 4px;
    width: 1px;
    background: #b9b9b9;
}

.clipboard { width: 236px; padding-left: 0; }
.font { width: 214px; padding-left: 8px; }
.align { width: 371px; }
.number { width: 146px; padding-left: 8px; }
.styles { width: 442px; }
.cells { width: 162px; }
.editing { width: 289px; }

.tools {
    flex: 1;
    display: flex;
    align-items: flex-start;
}

.caption {
    display: flex;
    align-items: center;
    height: 16px;
    text-align: center;
}

.caption span {
    flex: 1;
}

.font .caption span {
    padding-right: 12px;
}

.launcher {
    width: 9px;
    height: 9px;
    margin-right: 4px;
    color: #666;
}

.big {
    flex-direction: column;
    justify-content: flex-start;
    padding-top: 7px;
    line-height: 16px;
}

.big > svg:first-child {
    margin-bottom: 3px;
}

.big > .caret {
    margin-top: 5px;
}

.paste { width: 53px; padding-left: 4px; }
.cond { width: 92px; }
.tableau { width: 102px; }
.insert { width: 46px; }
.remove { width: 56px; }
.resize { width: 48px; }
.sort { width: 42px; }
.find { width: 78px; }

.stack {
    padding-top: 3px;
}

.editing .stack {
    width: 154px;
    padding-left: 3px;
}

.stack button {
    height: 23px;
    gap: 3px;
}

.stack .caret.near {
    margin-left: 0;
}

.rows {
    display: flex;
    flex-direction: column;
    gap: 8px;
    padding-top: 11px;
}

.row {
    display: flex;
    align-items: center;
    height: 23px;
}

.tool {
    width: 22px;
    height: 23px;
    gap: 6px;
    color: #444;
    font-size: 12px;
}

.align .tool {
    width: 23px;
}

.tool.wide,
.align .tool.wide {
    width: 34px;
}

.align .tool.text {
    width: auto;
    padding: 0 5px;
    gap: 4px;
    font-size: 11px;
    color: #262626;
}

.align .tool.merge {
    width: 147px;
    padding: 0 3px;
}

.merge .caret {
    margin: 0 4px 0 auto;
}

.tool.mini {
    font-size: 10px;
}

.tool.pct {
    font-size: 15px;
}

.pressed {
    background: #c6c6c6;
}

.tool i {
    font-family: "Liberation Serif", serif;
    font-size: 14px;
}

.tool.glyph {
    font-size: 14px;
    gap: 0;
}

.tool.glyph.small {
    font-size: 12px;
}

.mark {
    width: 5px;
    height: 4px;
    margin-bottom: 12px;
}

.sep {
    width: 1px;
    height: 22px;
    background: #d0d0d0;
}

.sep.slim {
    margin: 0 4px;
}

.sep.near {
    margin: 0 3px 0 2px;
}

.sep.tall {
    height: 56px;
    margin: 10px 5px 0 3px;
}

.pick {
    display: flex;
    align-items: center;
    height: 23px;
    padding: 0 3px;
    border: 1px solid #c3c3c3;
    background: #fff;
    font-size: 12px;
}

.pick select {
    flex: 1;
    min-width: 0;
}

.pick.name { width: 103px; }
.pick.size { width: 51px; border-left: 0; }
.pick.format { width: 132px; }

.gallery {
    display: flex;
    width: 231px;
    height: 62px;
    margin-top: 6px;
    background: #fff;
    border: 1px solid #c3c3c3;
}

.swatches {
    flex: 1;
    display: grid;
    grid-template-columns: 1fr 1fr;
    grid-template-rows: 27px 27px;
    gap: 2px;
    padding: 3px 1px 0;
}

.swatch {
    justify-content: flex-start;
    padding-left: 4px;
    margin: 1px 2px 3px;
    font-size: 14px;
    line-height: 18px;
}

.swatch.linked {
    color: #fa7d00;
    border-bottom: 3px double #fa7d00;
}

.swatch.entry {
    color: #3f3f76;
    background: #ffcc99;
    border: 1px solid #7f7f7f;
}

.swatch.visited {
    color: #70ad1f;
    text-decoration: underline;
}

.swatch.link {
    color: #b8690a;
    text-decoration: underline;
    padding-bottom: 3px;
}

.swatch.selected {
    margin: 0;
    padding-bottom: 3px;
    border: 3px solid #c6c6c6;
}

.spin {
    width: 17px;
    display: flex;
    flex-direction: column;
    border-left: 1px solid #c3c3c3;
}

.spin button {
    flex: 1;
    border-bottom: 1px solid #c3c3c3;
}

.spin .chev {
    width: 12px;
    height: 7px;
}

.spin .all {
    flex-direction: column;
    gap: 3px;
    border-bottom: 0;
}

.spin .all::before {
    content: "";
    width: 13px;
    height: 1px;
    background: #444;
}

.collapse {
    margin: auto 9px 2px auto;
}

.collapse .chev {
    width: 10px;
    height: 6px;
}

/* sheet */
.workspace {
    flex: 1;
    min-height: 0;
    display: flex;
}

.sheet {
    flex: 1;
    min-width: 0;
    position: relative;
    overflow: hidden;
    border-right: 1px solid #999;
}

table {
    width: 100%;
    table-layout: fixed;
    border-collapse: separate;
    border-spacing: 0;
}

.c-head { width: 26px; }
.c-a { width: 67px; }
.c-b { width: 137px; }
.c-m { width: 81px; }
.c-f { width: 103px; }
.c-g { width: 277px; }
.c-h { width: 150px; }
.c-j { width: 101px; }
.c-k { width: 215px; }
.c-s { width: 40px; }

th {
    padding: 0;
    font-size: 13px;
    line-height: 18px;
    font-weight: normal;
    background: #e6e6e6;
    color: #222;
}

thead th {
    height: 20px;
    border-right: 1px solid #b1b1b1;
    border-bottom: 1px solid #999;
}

thead .sel {
    background: #d2d2d2;
    color: #217346;
    border-bottom: 2px solid #217346;
    line-height: 17px;
}

thead .last {
    border-right: 0;
}

.corner svg {
    margin: 3px 3px 0 auto;
}

tbody th {
    vertical-align: bottom;
    border-right: 1px solid #999;
    border-bottom: 1px solid #ababab;
}

.tall th {
    padding-bottom: 6px;
}

.r25 th {
    vertical-align: middle;
}

td {
    padding: 0;
    background: #7de3e8;
    vertical-align: bottom;
}

.out {
    background: #fff;
}

.edge {
    border-top: 1px solid #000;
}

.r19 { height: 19px; }
.r22 { height: 22px; }
.r25 { height: 25px; }
.r32 { height: 32px; }
.r33 { height: 33px; }
.r34 { height: 34px; }
.r46 { height: 46px; }

.r19 th {
    line-height: 17px;
}

.lbl {
    padding: 0 0 6px 3px;
    font-size: 17px;
    line-height: 20px;
    font-weight: bold;
    color: #000;
}

.r25 .lbl {
    padding-bottom: 4px;
}

.choice {
    padding-bottom: 6px;
    text-align: center;
    font-size: 13px;
    line-height: 20px;
    font-weight: 800;
    color: #000;
}

.who {
    vertical-align: middle;
    text-align: center;
    font-size: 16px;
    line-height: 22px;
    font-weight: bold;
    color: #000;
}

.who.low {
    vertical-align: bottom;
    padding-bottom: 6px;
}

.field {
    display: block;
    position: relative;
    width: calc(100% + 3px);
    height: 49px;
    margin: -2px -1px -1px -2px;
    border: 3px double #000;
    background: #fff;
    background-clip: padding-box;
}

/* floating shapes */
.shapes {
    position: absolute;
    top: 20px;
    left: 0;
    right: 0;
    bottom: 0;
    overflow: hidden;
    pointer-events: none;
}

.pill {
    position: absolute;
    width: 244px;
    height: 58px;
    padding-bottom: 2px;
    border-radius: 29px;
    border: 1px solid #2a6fb4;
    color: #fff;
    font-size: 22px;
    font-weight: bold;
    background: linear-gradient(#4a98de, #2790de 50%, #1c85d2);
    box-shadow:
        inset 0 0 0 4px #2f86d6,
        inset 2px 0 1px 4px #06243f,
        inset 0 0 0 5px #1a68ad,
        inset -1px 0 0 6px #5aa7e6,
        1px 0 0 #0c3f6c,
        0 3px 4px rgba(0, 40, 50, 0.6);
    pointer-events: auto;
}

.pill.first { left: 43px; top: -45px; }
.pill.choix { left: 41px; top: 52px; }
.pill.imprimer { left: 41px; top: 152px; }
.pill.supprimer { left: 40px; top: 239px; }
.pill.mail { left: 34px; top: 346px; }

.logo {
    position: absolute;
    left: 60px;
    top: 503px;
    width: 280px;
    height: 210px;
}

.logo-text {
    font: bold 285px "Noto Sans", "Open Sans", sans-serif;
    stroke: #b9bdd4;
    stroke-width: 3px;
}

/* scroll bars */
.vscroll {
    width: 21px;
    display: flex;
    flex-direction: column;
    padding: 2px 3px 0;
}

.vscroll button,
.hscroll button {
    flex: none;
    width: 15px;
    height: 15px;
    background: #fff;
    border: 1px solid #ababab;
}

.track {
    flex: 1;
    display: flex;
    background: #dadada;
}

.thumb {
    background: #fff;
    border: 1px solid #ababab;
}

.vscroll .track {
    flex-direction: column;
    padding-top: 178px;
}

.vscroll .thumb {
    height: 42%;
}

/* sheet tabs */
.tabbar {
    display: flex;
    height: 28px;
    flex: none;
    border-top: 1px solid #999;
    background: #e6e6e6;
    font-size: 13px;
    color: #444;
}

.tabnav {
    width: 100px;
    display: flex;
    align-items: center;
    gap: 24px;
    padding-left: 27px;
}

.tab {
    position: relative;
    height: 26px;
    padding: 0 13px;
}

.tab::after {
    content: "";
    position: absolute;
    right: 0;
    top: 3px;
    height: 20px;
    width: 1px;
    background: #999;
}

.tab.current {
    align-items: stretch;
    height: 24px;
    padding: 0;
    font-size: 12px;
    font-weight: bold;
    color: #217346;
    background: #fff;
    border: 1px solid #ababab;
    border-top: 0;
    border-bottom: 2px solid #217346;
}

.tab.current::after {
    display: none;
}

.tab.current span {
    display: flex;
    align-items: center;
    padding: 3px 11px 0;
    margin: 0 1px 1px;
    background: linear-gradient(#fff 10%, #e59a9a);
}

.tab.tinted {
    padding: 0 2px;
    color: #000;
}

.tab.tinted span {
    padding: 3px 10px;
    background: #a0c8c8;
}

.add {
    margin-left: 33px;
}

.hscroll {
    flex: 0 0 40%;
    display: flex;
    align-items: center;
    margin-left: auto;
    padding-right: 21px;
}

.hscroll svg + button {
    margin-left: 14px;
}

.hscroll .track {
    height: 15px;
}

.hscroll .thumb {
    width: 69%;
}

/* status bar */
.status {
    display: flex;
    align-items: center;
    flex: none;
    height: 21px;
    gap: 20px;
    padding-left: 8px;
    background: #f3f3f3;
    border-top: 1px solid #c6c6c6;
}

.views {
    display: flex;
    align-items: center;
    margin-left: auto;
    padding-right: 7px;
}

.view {
    width: 40px;
    height: 20px;
}

.view.on {
    background: #c6c6c6;
}

.zoom-step {
    width: 18px;
    height: 19px;
    font-size: 16px;
}

.zoom {
    appearance: none;
    width: 102px;
    height: 13px;
    background: linear-gradient(#999, #999) center / 100% 1px no-repeat;
}

.zoom::-webkit-slider-thumb {
    appearance: none;
    width: 5px;
    height: 12px;
    background: #666;
}

.percent {
    padding-left: 8px;
}

.desk {
    flex: none;
    height: 2px;
    padding: 0 0 0 48px;
    background: #444;
}

.desk-light {
    width: 344px;
    height: 2px;
    background: #ccc;
}

/* dialogs */
.window {
    position: absolute;
    display: flex;
    flex-direction: column;
    background: #fff;
}

.bar {
    display: flex;
    align-items: center;
    justify-content: space-between;
    height: 30px;
    padding: 0 9px 0 8px;
}

.form {
    left: 635px;
    top: 229px;
    width: 650px;
    border: 1px solid #8a9a9a;
    box-shadow: 0 2px 14px rgba(0, 0, 0, 0.35);
    font-family: "DejaVu Sans Condensed", "DejaVu Sans", sans-serif;
    line-height: 13px;
}

.form .bar {
    color: #999;
    font-family: "Noto Sans", sans-serif;
    font-size: 12px;
}

.form-body {
    padding: 24px 32px 31px;
    background: #80ffff;
    color: #000;
}

.item {
    display: flex;
    flex-direction: column;
    gap: 5px;
}

.item label {
    font-weight: bold;
    text-align: center;
}

.centre {
    width: 96px;
    margin-left: 40px;
}

.adresse {
    width: 352px;
    margin-top: 17px;
}

.adresse label {
    padding-left: 16px;
}

.dest {
    width: 145px;
    margin: 25px 0 0 16px;
}

.dest label {
    padding-right: 2px;
}

.trio {
    display: flex;
    gap: 48px;
    margin: 67px 0 32px;
}

.trio .item {
    width: 160px;
    gap: 10px;
}

.trio label {
    padding-right: 18px;
}

.combo {
    display: flex;
    height: 24px;
    padding: 1px;
    background: #fff;
    border: 1px solid;
    border-color: #808080 #fff #fff #808080;
    box-shadow: inset 1px 1px 0 #696969, inset -1px -1px 0 #e3e3e3;
}

.combo select {
    flex: 1;
    min-width: 0;
    padding-left: 9px;
    overflow: hidden;
}

.combo::after {
    content: "";
    width: 16px;
    background: linear-gradient(#000, #000) 4px 7px / 7px 1px no-repeat, linear-gradient(#000, #000) 5px 8px / 5px 1px no-repeat, linear-gradient(#000, #000) 6px 9px / 3px 1px no-repeat, linear-gradient(#000, #000) 7px 10px / 1px 1px no-repeat, #f0f0f0;
    border: 1px solid;
    border-color: #e3e3e3 #696969 #696969 #e3e3e3;
    box-shadow: inset -1px -1px 0 #a0a0a0;
}

.list {
    height: 95px;
    padding: 2px 0 0 8px;
    background: #fff;
    border: 1px solid;
    border-color: #808080 #fff #fff #808080;
    box-shadow: inset 1px 1px 0 #696969;
    overflow: hidden;
}

.list option {
    min-height: 13px;
    padding: 0 2px;
}

.push {
    width: 96px;
    height: 32px;
    margin: 0 auto 40px 232px;
    font-weight: bold;
    background: #f0f0f0;
    border: 1px solid;
    border-color: #fff #696969 #696969 #fff;
    box-shadow: inset -1px -1px 0 #a0a0a0, inset 1px 1px 0 #e3e3e3;
}

.push.default {
    border-color: #000;
    box-shadow: inset -1px -1px 0 #696969, inset -2px -2px 0 #a0a0a0, inset 1px 1px 0 #fff;
}

.push:last-child {
    margin-bottom: 0;
}

.msgbox {
    left: 762px;
    top: 468px;
    width: 412px;
    border: 1px solid #4c6a6a;
    box-shadow: 0 4px 18px rgba(0, 0, 0, 0.4);
    color: #000;
}

.msgbox .bar {
    font-size: 12px;
}

.msgbox p {
    margin: 0;
    padding: 23px 11px;
    line-height: 13px;
}

.actions {
    display: flex;
    justify-content: flex-end;
    padding: 10px 17px;
    background: #f0f0f0;
}

.ok {
    width: 81px;
    height: 21px;
    background: #e1e1e1;
    border: 2px solid #0078d7;
}
```
